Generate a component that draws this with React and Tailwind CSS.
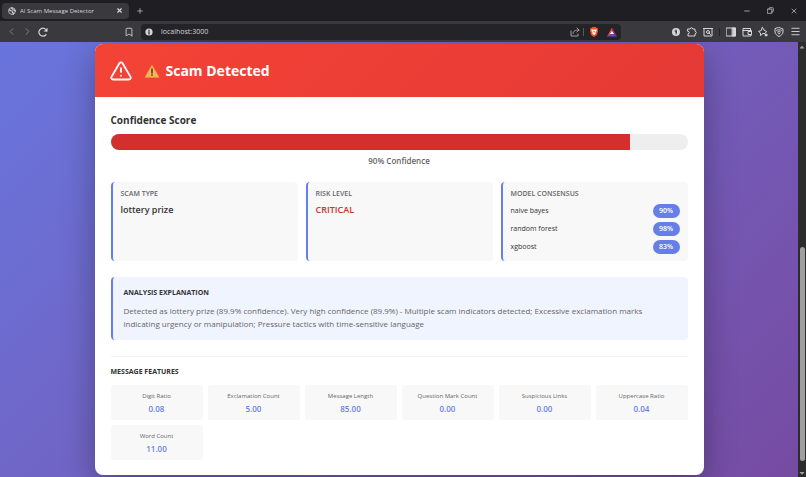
import React from 'react';
import { FaCaretUp, FaCaretDown } from 'react-icons/fa';
import {
  Bookmark,
  ChevronLeft,
  ChevronRight,
  Menu,
  Minus,
  Plus,
  X,
} from 'lucide-react';

const models = [
  { name: 'naive bayes', score: 90 },
  { name: 'random forest', score: 98 },
  { name: 'xgboost', score: 83 },
];

const features = [
  { label: 'Digit Ratio', value: 0.08 },
  { label: 'Exclamation Count', value: 5 },
  { label: 'Message Length', value: 85 },
  { label: 'Question Mark Count', value: 0 },
  { label: 'Suspicious Links', value: 0 },
  { label: 'Uppercase Ratio', value: 0.04 },
  { label: 'Word Count', value: 11 },
];

function Icon({ children, className = 'size-[10px]', box = '0 0 20 20' }) {
  return (
    <svg viewBox={box} className={className} fill="none" stroke="currentColor" strokeWidth="2" strokeLinecap="round" strokeLinejoin="round" aria-hidden="true">
      {children}
    </svg>
  );
}

function TabBar() {
  return (
    <div className="flex h-[21px] items-center bg-[#1f1e23] pl-[2px] text-[#d6d6da]">
      <div className="flex h-4 w-[127px] items-center rounded bg-[#3a393e] px-[6px]">
        <Icon className="size-2">
          <circle cx="10" cy="10" r="8.5" />
          <path d="M3 7c3 0 3 3 6 3s1 4 3 4 1 3 1 4M9 2c0 3 3 2 3 4s4 1 5 3" strokeWidth="3" />
        </Icon>
        <span className="ml-1 flex-1 truncate text-[6px] leading-4">AI Scam Message Detector</span>
        <button aria-label="Close tab"><X className="size-[7px]" strokeWidth={4} /></button>
      </div>
      <button aria-label="New tab" className="ml-[7px]"><Plus className="size-2" strokeWidth={2} /></button>
      <div className="ml-auto flex items-center gap-4 pr-2">
        <button aria-label="Minimize"><Minus className="size-2" /></button>
        <button aria-label="Restore">
          <Icon className="size-[7px]">
            <path d="M2 6h12v12H2zM6 6V4q0-2 2-2h8q2 0 2 2v8q0 2-2 2h-2" />
          </Icon>
        </button>
        <button aria-label="Close window"><X className="size-2" /></button>
      </div>
    </div>
  );
}

function Toolbar() {
  return (
    <div className="flex h-[21px] items-center bg-[#3a393e] pr-[5px] pl-[6px] text-[#d6d6da]">
      <div className="flex w-[135px] items-center gap-[5px]">
        <button aria-label="Back" className="text-[#85848a]"><ChevronLeft className="size-[11px]" /></button>
        <button aria-label="Forward" className="text-[#85848a]"><ChevronRight className="size-[11px]" /></button>
        <button aria-label="Reload">
          <Icon>
            <path d="M16 15.5A8 8 0 1 1 17.5 8" strokeWidth="2.4" />
            <path d="M13 8.5h5.5V3z" fill="currentColor" strokeWidth="1" />
          </Icon>
        </button>
        <button aria-label="Bookmark" className="mr-[7px] ml-auto"><Bookmark className="size-[10px]" /></button>
      </div>
      <div className="flex h-4 min-w-0 flex-1 items-center rounded bg-[#242328] px-1">
        <Icon className="size-2">
          <circle cx="10" cy="10" r="9" fill="currentColor" stroke="none" />
          <path d="M10 9v6M10 5v1" stroke="#242328" strokeWidth="3" />
        </Icon>
        <input aria-label="Address" defaultValue="localhost:3000" className="ml-2 h-4 min-w-0 flex-1 bg-transparent text-[7px] leading-4 outline-none" />
        <button aria-label="Share" className="text-[#a09fa5]">
          <Icon>
            <path d="M2 8v10h14v-4M6 13c0-5 4-7 12-7M14 2l4 4-4 4" />
          </Icon>
        </button>
        <span className="mr-[5px] ml-[3px] h-2 w-px bg-[#5a595f]" />
        <button aria-label="Shields">
          <svg viewBox="0 0 20 22" className="size-[10px]">
            <path d="M6 0h8l2 2 3 1-1 4 1 2-3 9-6 4-6-4-3-9 1-2-1-4 3-1z" fill="#f4511e" />
            <path d="M5 5l5 1 5-1 1 3-3 4 1 2-4 4-4-4 1-2-3-4z" fill="#fff" />
            <path d="M8 9l2 4 2-4z" fill="#f4511e" />
          </svg>
        </button>
        <button aria-label="Rewards" className="ml-2">
          <svg viewBox="0 0 20 18" className="size-[10px]">
            <path d="M10 0L0 18l10-6z" fill="#f4511e" />
            <path d="M10 0l10 18-10-6z" fill="#a02480" />
            <path d="M0 18h20l-10-6z" fill="#5a4be0" />
            <path d="M10 7l-4 6h8z" fill="#fff" />
          </svg>
        </button>
      </div>
      <div className="flex w-[180px] items-center justify-end gap-[6px]">
        <button aria-label="Password manager">
          <Icon>
            <circle cx="10" cy="10" r="8" fill="currentColor" stroke="none" />
            <path d="M10 6v8M8 8h3v3" stroke="#3a393e" />
          </Icon>
        </button>
        <button aria-label="Extensions">
          <Icon>
            <path d="M2 4h4.500a2.500 2.500 0 0 1 5 0H16v4.500a2.500 2.500 0 0 1 0 5V18H2v-4.500a2.500 2.500 0 0 0 0-5z" />
          </Icon>
        </button>
        <button aria-label="Search page">
          <Icon>
            <path d="M1 3h18M2 3v15h16V3" />
            <circle cx="10" cy="10" r="3" />
            <path d="M12 12l3 3" />
          </Icon>
        </button>
        <span className="h-2 w-px bg-[#232227]" />
        <button aria-label="Sidebar">
          <Icon>
            <path d="M1 2h18v16H1z" />
            <path d="M13 2h6v16h-6z" fill="currentColor" />
          </Icon>
        </button>
        <button aria-label="Wallet">
          <Icon>
            <path d="M17 7V3H2v15h16v-3M2 7h17v8h-7V9h7" />
          </Icon>
        </button>
        <button aria-label="Assistant">
          <Icon>
            <path d="M9 1l3 5 5 3-3 4-4 0-5 4 0-5-4-3 5-2z" />
            <circle cx="16" cy="16" r="2" fill="currentColor" />
          </Icon>
        </button>
        <button aria-label="VPN">
          <Icon>
            <path d="M10 1l8 3v6c0 4-4 7-8 9-4-2-8-5-8-9V4zM5 7c3-2 7-2 10 0M7 10c2-1 4-1 6 0" />
            <circle cx="10" cy="13" r="1" />
          </Icon>
        </button>
        <button aria-label="Menu"><Menu className="size-[11px]" /></button>
      </div>
    </div>
  );
}

function InfoCard({ title, children }) {
  return (
    <div className="min-h-[79px] rounded border-l-2 border-[#667eea] bg-[#f8f8f8] px-2 py-[7px]">
      <h3 className="text-[7px] leading-[10px] font-semibold text-[#666] uppercase">{title}</h3>
      {children}
    </div>
  );
}

function ResultCard() {
  const confidence = 90;

  return (
    <main className="mx-auto w-full max-w-[609px] overflow-hidden rounded-lg bg-white shadow-[0_10px_32px_rgba(0,0,0,0.3)]">
      <header className="flex h-[53px] items-center bg-linear-135 from-[#f44336] to-[#e53935] px-[15px] text-white">
        <Icon className="size-[22px]" box="0 0 24 24">
          <path d="M10.3 3.6L1.6 18.4a2 2 0 0 0 1.7 2.9h17.4a2 2 0 0 0 1.7-2.9L13.7 3.6a2 2 0 0 0-3.4 0zM12 9v4M12 17v.1" />
        </Icon>
        <h1 className="ml-3 flex items-center gap-[6px] text-[14px] leading-5 font-bold">
          <svg viewBox="0 0 24 22" className="h-[14px] w-4" role="img" aria-label="Warning">
            <path d="M12 1.5L23 21H1z" fill="#f9b455" stroke="#f2a33c" strokeLinejoin="round" />
            <path d="M12 8v6M12 17.2v.5" stroke="#4d4435" strokeWidth="2.6" strokeLinecap="round" />
          </svg>
          Scam Detected
        </h1>
      </header>

      <div className="px-4 pt-4 pb-[15px]">
        <section>
          <h2 className="text-[10px] leading-[14px] font-bold text-[#333]">Confidence Score</h2>
          <div className="mt-[7px] h-4 overflow-hidden rounded-full bg-[#eee]">
            <div className="h-full bg-[#d32f2f]" style={{ width: `${confidence}%` }} />
          </div>
          <p className="mt-1 text-center text-[8px] leading-[14px] font-semibold text-[#666]">{confidence}% Confidence</p>
        </section>

        <section className="mt-[14px] grid grid-cols-3 gap-2">
          <InfoCard title="Scam Type">
            <p className="mt-1 text-[9px] leading-[14px] font-semibold text-[#333]">lottery prize</p>
          </InfoCard>
          <InfoCard title="Risk Level">
            <p className="mt-1 text-[9px] leading-[14px] font-semibold text-[#d32f2f]">CRITICAL</p>
          </InfoCard>
          <InfoCard title="Model Consensus">
            <ul className="mt-[5px] flex flex-col gap-1 text-[7px] leading-[14px] text-[#333]">
              {models.map((model) => (
                <li key={model.name} className="flex justify-between">
                  <span>{model.name}</span>
                  <span className="w-[27px] rounded-full bg-[#667eea] text-center font-semibold text-white">{model.score}%</span>
                </li>
              ))}
            </ul>
          </InfoCard>
        </section>

        <section className="mt-4 rounded border-l-2 border-[#667eea] bg-[#f0f4ff] px-[11px] pt-[9px] pb-[10px]">
          <h3 className="text-[7px] leading-[14px] font-bold text-[#333] uppercase">Analysis Explanation</h3>
          <p className="mt-1 text-[8px] leading-[13px] text-[#666]">
            Detected as lottery prize (89.9% confidence). Very high confidence (89.9%) - Multiple scam indicators detected; Excessive exclamation marks indicating urgency or manipulation; Pressure tactics with time-sensitive language
          </p>
        </section>

        <section className="mt-4 border-t border-[#f2f2f2] pt-2">
          <h3 className="text-[7px] leading-[14px] font-bold text-[#333] uppercase">Message Features</h3>
          <dl className="mt-[6px] grid grid-cols-6 gap-[5px] text-center">
            {features.map((feature) => (
              <div key={feature.label} className="rounded-[3px] bg-[#f8f8f8] py-[5px]">
                <dt className="text-[6px] leading-3 text-[#666]">{feature.label}</dt>
                <dd className="text-[8px] leading-[13px] font-semibold text-[#667eea]">{feature.value.toFixed(2)}</dd>
              </div>
            ))}
          </dl>
        </section>
      </div>
    </main>
  );
}

export default function App() {
  return (
    <div className="flex min-h-screen flex-col font-['Open_Sans','Noto_Sans',sans-serif]">
      <TabBar />
      <Toolbar />
      <div className="flex flex-1">
        <div className="min-w-0 flex-1 overflow-hidden bg-linear-135 from-[#6875dd] to-[#764ba2] py-[2px]">
          <ResultCard />
        </div>
        <div className="flex w-2 flex-col items-center bg-[#2c2c2c] pt-px text-[#a0a0a0]">
          <FaCaretUp className="size-2" />
          <div className="grow-[196]" />
          <div className="w-[5px] grow-[214] rounded-full bg-[#9f9f9f]" />
          <div className="h-2" />
          <FaCaretDown className="size-2" />
        </div>
      </div>
    </div>
  );
}
